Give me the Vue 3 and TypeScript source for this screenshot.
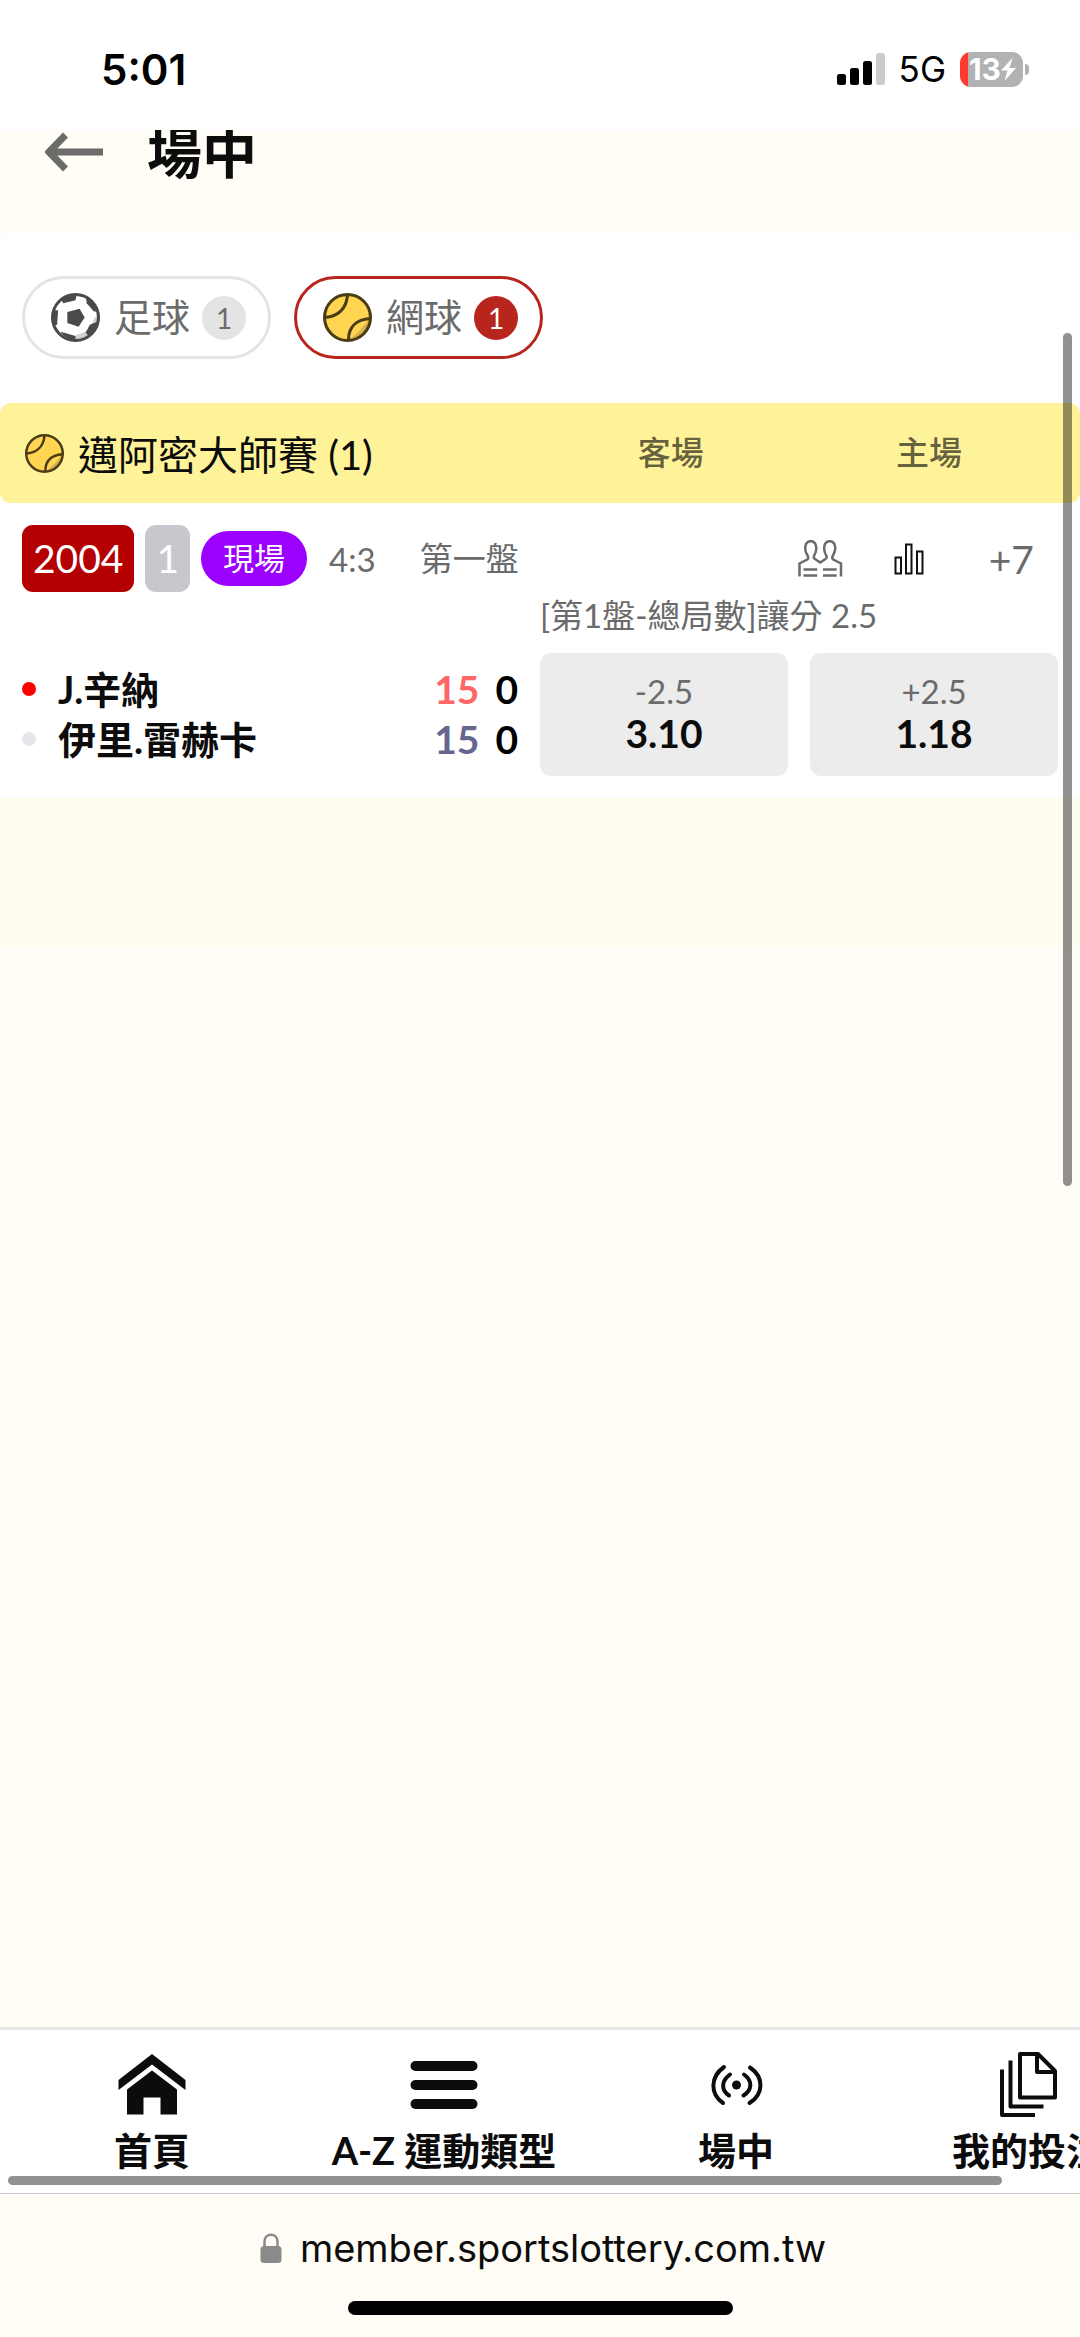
<script setup lang="ts">
import { ref } from 'vue'

interface Sport {
  id: 'soccer' | 'tennis'
  name: string
  count: number
}

interface Player {
  name: string
  serving: boolean
  points: number
  games: number
  tone: string
}

interface Odds {
  line: string
  price: string
}

interface NavItem {
  id: 'home' | 'menu' | 'live' | 'bets'
  label: string
}

const sports: Sport[] = [
  { id: 'soccer', name: '足球', count: 1 },
  { id: 'tennis', name: '網球', count: 1 },
]

const players: Player[] = [
  { name: 'J.辛納', serving: true, points: 15, games: 0, tone: 'warm' },
  { name: '伊里.雷赫卡', serving: false, points: 15, games: 0, tone: 'cool' },
]

const odds: Odds[] = [
  { line: '-2.5', price: '3.10' },
  { line: '+2.5', price: '1.18' },
]

const navItems: NavItem[] = [
  { id: 'home', label: '首頁' },
  { id: 'menu', label: 'A-Z 運動類型' },
  { id: 'live', label: '場中' },
  { id: 'bets', label: '我的投注' },
]

const activeSport = ref<Sport['id']>('tennis')
</script>

<template>
  <div class="screen">
    <div class="status">
      <span class="clock">5:01</span>
      <div class="indicators">
        <svg class="signal" viewBox="0 0 48 32" aria-hidden="true">
          <rect x="0" y="21" width="9" height="11" rx="2.5" />
          <rect x="13" y="15" width="9" height="17" rx="2.5" />
          <rect x="26" y="8" width="9" height="24" rx="2.5" />
          <rect x="39" y="0" width="9" height="32" rx="2.5" fill="#cbcbcb" />
        </svg>
        <span class="network">5G</span>
        <div class="battery">
          <span class="level">13</span>
          <svg class="bolt" viewBox="0 0 15 23" aria-hidden="true">
            <path d="M11.500 0 0 12.500H6.500L3.500 23 15 10H8.500Z" fill="#fff" />
          </svg>
        </div>
        <i class="nub"></i>
      </div>
    </div>

    <header class="page-head">
      <button class="back" type="button" aria-label="返回">
        <svg viewBox="0 0 58 40" aria-hidden="true">
          <path d="M58 20H5M20.500 3 4 20l16.500 17" fill="none" stroke="#6b6b69" stroke-width="7" />
        </svg>
      </button>
      <h1>場中</h1>
    </header>

    <main class="panel">
      <div class="tabs">
        <button
          v-for="sport in sports"
          :key="sport.id"
          type="button"
          class="tab"
          :class="{ active: sport.id === activeSport }"
          @click="activeSport = sport.id"
        >
          <svg v-if="sport.id === 'soccer'" class="ball" viewBox="0 0 48 48" aria-hidden="true">
            <circle cx="24" cy="24" r="22.500" fill="#fff" />
            <path d="M46 22l-4 3c-2 9-8 14-17 16l-2 5c13 2 24-8 23-24Z" fill="#d2d2d2" />
            <g fill="#4a4a4a">
              <path d="M16 18.500 28 15.500l5 8.500-6 9L16 29.500Z" />
              <path d="M10 6l2 4 12-3 1-5c-6-1-11 1-15 4Z" />
              <path d="M34 3l1 7 7 8h4C45 12 40 6 34 3Z" />
              <path d="M2 17h5l-1 14-4 1C0 27 0 22 2 17Z" />
              <path d="M9 38l4 1 11 3v4c-6 0-11-3-15-8Z" />
              <path d="M46 28l-8 3-4 8 3 3c6-3 8-8 9-14Z" />
            </g>
            <circle cx="24" cy="24" r="22.500" fill="none" stroke="#4a4a4a" stroke-width="3" />
          </svg>
          <svg v-else class="ball" viewBox="0 0 48 48" aria-hidden="true">
            <circle cx="24" cy="24" r="22.500" fill="#ffd552" />
            <path d="M44 27c-5 7-10 13-18 18 12 2 21-8 20-18Z" fill="#d6b24c" />
            <g fill="none" stroke="#4a3c14" stroke-width="3">
              <path d="M24 2C23 15 15 23 2 24M46 25C33 26 25 33 25 46" />
              <circle cx="24" cy="24" r="22.500" />
            </g>
          </svg>
          <span class="tab-name">{{ sport.name }}</span>
          <span class="count">{{ sport.count }}</span>
        </button>
      </div>

      <section>
        <div class="league">
          <h2>
            <svg viewBox="0 0 48 48" aria-hidden="true">
              <circle cx="24" cy="24" r="22.500" fill="#ffd552" />
              <path d="M44 27c-5 7-10 13-18 18 12 2 21-8 20-18Z" fill="#d6b24c" />
              <g fill="none" stroke="#4a3c14" stroke-width="3">
                <path d="M24 2C23 15 15 23 2 24M46 25C33 26 25 33 25 46" />
                <circle cx="24" cy="24" r="22.500" />
              </g>
            </svg>
            邁阿密大師賽 (1)
          </h2>
          <div class="sides">
            <span>客場</span>
            <span>主場</span>
          </div>
        </div>

        <div class="match">
          <div class="meta">
            <span class="code">2004</span>
            <span class="code rank">1</span>
            <span class="live">現場</span>
            <span class="sets">4:3</span>
            <span class="period">第一盤</span>
            <div class="tools">
              <button type="button" aria-label="對戰">
                <svg class="people" viewBox="0 0 45 37" aria-hidden="true">
                  <g fill="none" stroke="#6b6b6b" stroke-width="2.500">
                    <path d="M1.500 36.500V23.500L9.300 19.500Q11 18 9.500 15.500C5.500 9 7 1.200 12.700 1.200S20 9 16.200 15.500Q15 18 17 19L22.200 22.500 27.500 19Q29.500 18 28.200 15.500C24.500 9 26 1.200 31.700 1.200S39 9 35 15.500Q33.500 18 35.200 19.500L43 23.500V36.500" />
                    <path d="M5.500 29.500H19.200M5.500 35.500H19.200M25 29.500H38.700M25 35.500H38.700" />
                  </g>
                </svg>
              </button>
              <button type="button" aria-label="統計">
                <svg class="chart" viewBox="0 0 30 32" aria-hidden="true">
                  <path d="M1.500 14.500H7V30.500H1.500ZM12 1.500H17.500V30.500H12ZM23 8.500H28.500V30.500H23Z" fill="none" stroke="#111" stroke-width="2" />
                </svg>
              </button>
              <a href="#more" class="more">+7</a>
            </div>
          </div>

          <p class="market">[第1盤-總局數]讓分 2.5</p>

          <div class="lines">
            <div class="players">
              <div v-for="player in players" :key="player.name" class="player">
                <i class="dot" :class="{ serving: player.serving }"></i>
                <span class="name">{{ player.name }}</span>
                <span class="points" :class="player.tone">{{ player.points }}</span>
                <span class="games">{{ player.games }}</span>
              </div>
            </div>
            <div class="odds">
              <button v-for="odd in odds" :key="odd.line" type="button">
                <span>{{ odd.line }}</span>
                <strong>{{ odd.price }}</strong>
              </button>
            </div>
          </div>
        </div>
      </section>
    </main>

    <div class="tint"></div>
    <i class="scroll-y"></i>

    <div class="bottom">
      <nav>
        <a v-for="item in navItems" :key="item.id" :href="`#${item.id}`">
          <svg viewBox="0 0 68 68" aria-hidden="true">
            <g v-if="item.id === 'home'" fill="#0c0c0c">
              <path d="M34 4 67.500 30V40L34 14.500.500 40V30Z" />
              <path d="M34 20.500 59 39.500V64.500H42.500V47.500H25.500V64.500H9V39.500Z" />
            </g>
            <g v-else-if="item.id === 'menu'" fill="#0c0c0c">
              <rect x="0.500" y="11" width="67" height="10" rx="5" />
              <rect x="0.500" y="30" width="67" height="10" rx="5" />
              <rect x="0.500" y="49" width="67" height="10" rx="5" />
            </g>
            <g v-else-if="item.id === 'live'" fill="none" stroke="#0c0c0c" stroke-width="4" stroke-linecap="round">
              <path d="M22 17C8 27 8 44 21 53M28 24.500C19 31 19 40 27 45.500M48 17.500C62 27 62 44 47.500 53M42 24.500C51 31 50 40 41.500 45.500" />
              <circle cx="34.500" cy="35" r="4.500" fill="#0c0c0c" stroke="none" />
            </g>
            <g v-else fill="none" stroke="#0c0c0c" stroke-width="4" stroke-linejoin="round">
              <path d="M26 4H44L61 21V47.500H26ZM43 4V22H61" />
              <path d="M16.500 10.500V56.500H49.500M8 19.500V65H41" />
            </g>
          </svg>
          <span>{{ item.label }}</span>
        </a>
      </nav>
      <i class="scroll-x"></i>
    </div>

    <footer class="browser">
      <a class="address" href="#address">
        <svg viewBox="0 0 22 30" aria-hidden="true">
          <rect x="0.500" y="13" width="21" height="17" rx="3.500" fill="#8a8a8a" />
          <path d="M4.500 14V8.500C4.500 -0.500 17.500 -0.500 17.500 8.500V14" fill="none" stroke="#8a8a8a" stroke-width="2.500" />
        </svg>
        member.sportslottery.com.tw
      </a>
      <i class="home-bar"></i>
    </footer>
  </div>
</template>

<style>
body {
  margin: 0;
}
</style>

<style scoped>
.screen {
  position: relative;
  display: flex;
  flex-direction: column;
  min-height: 100vh;
  overflow: hidden;
  background: #fffdf6;
  color: #0c0c0c;
  font-family: Lato, "Noto Sans CJK TC", sans-serif;
}

button {
  padding: 0;
  border: 0;
  background: none;
  color: inherit;
  font: inherit;
}

a {
  color: inherit;
  text-decoration: none;
}

svg {
  display: block;
  flex: none;
}

h1,
h2,
p {
  margin: 0;
}

.status {
  display: flex;
  align-items: center;
  justify-content: space-between;
  box-sizing: border-box;
  height: 130px;
  padding: 8px 51px 0 101px;
  background: #fff;
  color: #000;
  font-family: Inter, sans-serif;
}

.clock {
  font-size: 42px;
  font-weight: 600;
}

.indicators {
  display: flex;
  align-items: center;
}

.signal {
  width: 48px;
  height: 32px;
}

.network {
  margin: 0 14px;
  font-size: 35px;
  font-weight: 400;
}

.battery {
  display: flex;
  align-items: center;
  justify-content: flex-end;
  box-sizing: border-box;
  width: 63px;
  height: 35px;
  padding-right: 7px;
  border-radius: 11px;
  background: linear-gradient(90deg, #ff3b30 8px, #b2b2b2 8px);
  color: #fff;
}

.level {
  font-size: 30px;
  font-weight: 700;
  line-height: 35px;
}

.bolt {
  width: 15px;
  height: 23px;
}

.nub {
  width: 4px;
  height: 11px;
  margin-left: 2px;
  border-radius: 0 6px 6px 0;
  background: #b2b2b2;
}

.page-head {
  display: flex;
  align-items: center;
  gap: 44px;
  box-sizing: border-box;
  height: 102px;
  padding: 0 45px 59px;
  overflow: hidden;
}

.back svg {
  width: 58px;
  height: 40px;
}

h1 {
  font-size: 55px;
  font-weight: 700;
  line-height: 60px;
}

.panel {
  border-radius: 11px 11px 0 0;
  background: #fff;
}

.tabs {
  display: flex;
  gap: 23px;
  padding: 44px 22px;
}

.tab {
  display: flex;
  align-items: center;
  box-sizing: border-box;
  height: 83px;
  padding: 0 22px 0 26px;
  border: 3px solid #e4e4e4;
  border-radius: 42px;
  color: #6b6b6b;
}

.tab.active {
  border-color: #b8251c;
}

.ball {
  width: 49px;
  height: 49px;
}

.tab-name {
  margin: 0 12px 0 14px;
  font-size: 38px;
  line-height: 48px;
}

.count {
  width: 44px;
  border-radius: 50%;
  background: #e4e4e4;
  font-size: 28px;
  line-height: 44px;
  text-align: center;
}

.active .count {
  background: #b8251c;
  color: #fff;
}

.league {
  display: flex;
  align-items: center;
  height: 100px;
  border-radius: 11px;
  background: #fff399;
}

h2 {
  display: flex;
  flex: 1;
  align-items: center;
  gap: 14px;
  padding-left: 25px;
  font-size: 40px;
  font-weight: 400;
}

h2 svg {
  width: 39px;
  height: 39px;
}

.sides {
  display: flex;
  flex: 1;
  padding-right: 22px;
}

.sides span {
  flex: 1;
  color: rgba(0, 0, 0, 0.6);
  font-size: 33px;
  font-weight: 500;
  text-align: center;
}

.match {
  padding: 22px;
}

.meta {
  display: flex;
  align-items: center;
  gap: 11px;
  height: 67px;
  padding-right: 24px;
  color: #6b6b6b;
  font-size: 33px;
}

.code {
  padding: 0 11px;
  border-radius: 11px;
  background: #b40000;
  color: #fff;
  font-size: 39px;
  line-height: 67px;
}

.rank {
  background: #c7c7cd;
}

.live {
  padding: 0 22px;
  border-radius: 28px;
  background: #9c00ff;
  color: #fff;
  font-size: 31px;
  line-height: 55px;
}

.sets {
  margin: 0 33px 0 11px;
}

.tab-name,
.sides span,
.period,
.name {
  padding-bottom: 4px;
}

.tools {
  display: flex;
  align-items: center;
  gap: 51px;
  margin-left: auto;
}

.people {
  width: 45px;
  height: 37px;
}

.chart {
  width: 30px;
  height: 32px;
}

.more {
  margin-left: 14px;
  font-size: 39px;
}

.market {
  width: 50%;
  margin: 0 0 14px auto;
  color: #6b6b6b;
  font-size: 33px;
  line-height: 47px;
}

.lines {
  display: grid;
  grid-template-columns: 1fr 1fr;
}

.players {
  padding: 11px 22px 0 0;
}

.player {
  display: flex;
  align-items: center;
  height: 50px;
  font-size: 38px;
}

.dot {
  width: 14px;
  height: 14px;
  border-radius: 50%;
  background: #e5e5ea;
}

.dot.serving {
  background: #f00;
}

.name {
  flex: 1;
  margin-left: 22px;
  font-weight: 700;
}

.points,
.games {
  font-size: 39px;
  font-weight: 700;
}

.games {
  margin-left: 16px;
  color: #000;
}

.warm {
  color: #f66;
}

.cool {
  color: #666690;
}

.odds {
  display: flex;
  gap: 22px;
}

.odds button {
  display: flex;
  flex: 1;
  flex-direction: column;
  align-items: center;
  justify-content: center;
  box-sizing: border-box;
  height: 123px;
  padding-bottom: 6px;
  border-radius: 11px;
  background: #ececec;
  line-height: 42px;
}

.odds span {
  color: #6b6b6b;
  font-size: 33px;
}

.odds strong {
  font-size: 39px;
}

.tint {
  flex: 0 0 149px;
  background: #fffcf0;
}

.scroll-y {
  position: absolute;
  top: 333px;
  right: 8px;
  width: 9px;
  height: 853px;
  border-radius: 5px;
  background: rgba(0, 0, 0, 0.43);
}

.bottom {
  position: relative;
  height: 163px;
  margin-top: auto;
  border-top: 3px solid #e5e5e5;
  border-bottom: 1px solid #c8c8c8;
  background: #fff;
}

nav {
  display: flex;
  padding: 20px 6px 0;
  overflow: hidden;
}

nav a {
  display: flex;
  flex: 0 0 292px;
  flex-direction: column;
  align-items: center;
  font-size: 38px;
  font-weight: 700;
  line-height: 64px;
}

nav svg {
  width: 68px;
  height: 68px;
}

.scroll-x {
  position: absolute;
  right: 78px;
  bottom: 8px;
  left: 8px;
  height: 9px;
  border-radius: 5px;
  background: #929292;
}

.browser {
  display: flex;
  flex-direction: column;
  align-items: center;
  height: 143px;
}

.address {
  display: flex;
  align-items: center;
  gap: 18px;
  height: 107px;
  padding-left: 6px;
  color: #0c0c0c;
  font-family: Inter, sans-serif;
  font-size: 38px;
}

.address svg {
  width: 22px;
  height: 30px;
}

.home-bar {
  width: 385px;
  height: 14px;
  border-radius: 7px;
  background: #000;
}
</style>
